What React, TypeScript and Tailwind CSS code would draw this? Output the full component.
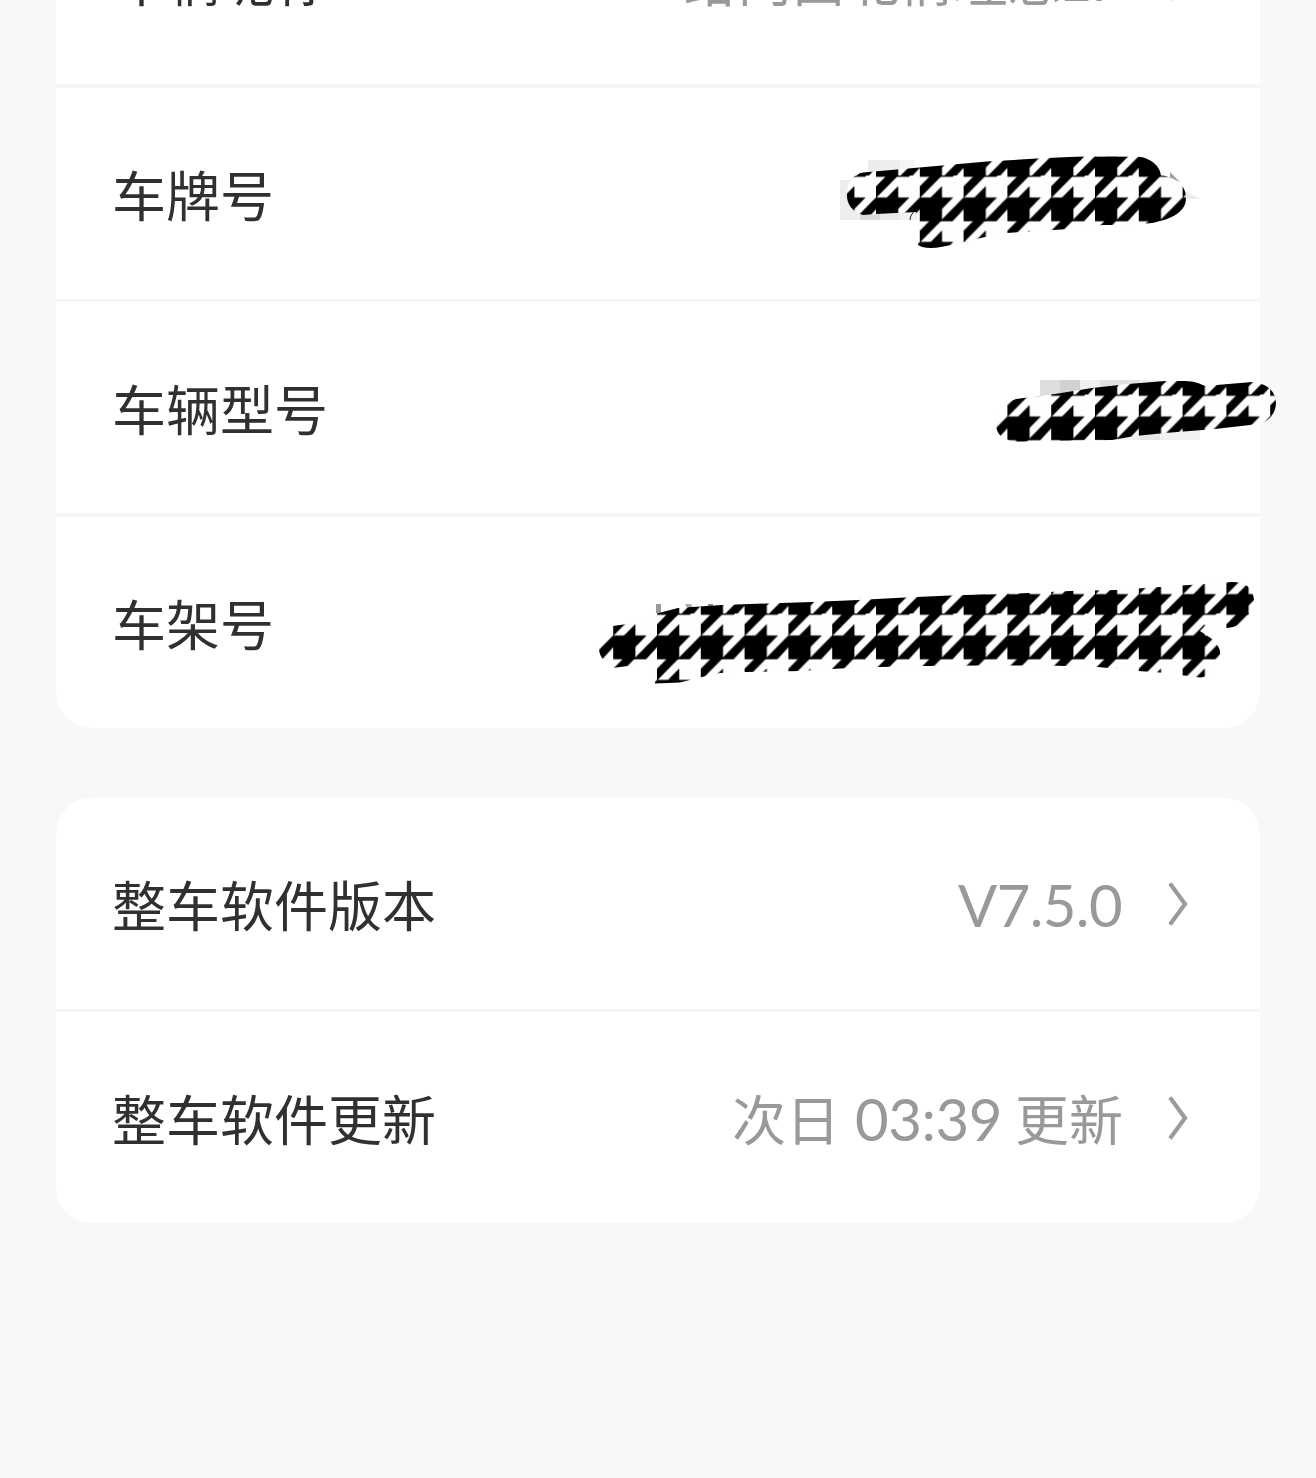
import type { ReactNode } from "react";

interface RowProps {
  label: string;
  children?: ReactNode;
}

const Row = ({ label, children }: RowProps) => (
  <div className="flex h-[211px] items-center justify-between pr-[72px] pl-14">
    <span className="text-[54px] leading-none text-[#303030]">{label}</span>
    {children}
  </div>
);

const Chevron = () => (
  <svg width="20" height="44" viewBox="0 0 20 44" fill="none" className="ml-[45px]">
    <path d="M2 1.5 L17 22 L2 42.5" stroke="#9b9b9b" strokeWidth="4.2" />
  </svg>
);

interface ValueProps {
  children: ReactNode;
}

const Value = ({ children }: ValueProps) => (
  <div className="flex items-center text-[54px] leading-none text-[#999999]">
    {children}
    <Chevron />
  </div>
);

// one houndstooth check, drawn on a 2x2 grid
const Check = ({ y }: { y: number }) => (
  <g transform={`translate(0 ${y}) scale(21.9 22.2)`} stroke="#000" strokeWidth="0.03">
    <path d="M0 0H1V1.04H0Z M1 0H1.5L1 .5Z M2 0V.5L1.5 1.04H1V1Z M.5 1H1L0 2V1.5Z M1 2V1.5L.5 2Z" />
  </g>
);

const checkRows = [-22.1, 22.3, 66.7, 111.1, 155.5, 199.9];

interface ScribbleProps {
  id: string;
  d: string;
  children?: ReactNode;
}

const Scribble = ({ id, d, children }: ScribbleProps) => (
  <>
    {children}
    <defs>
      <pattern id={id} patternUnits="userSpaceOnUse" x="0" y="175.5" width="43.8" height="219">
        <rect width="43.8" height="219" fill="#fefefe" />
        {checkRows.map((y) => (
          <Check key={y} y={y} />
        ))}
      </pattern>
    </defs>
    <path d={d} fill={`url(#${id})`} />
  </>
);

const Divider = ({ thick = false }: { thick?: boolean }) => (
  <div className={thick ? "h-1 bg-[#f5f5f5]" : "h-[3px] bg-[#f5f5f5]"} />
);

export default function App() {
  return (
    <div className="relative h-[1478px] w-[1316px] overflow-hidden bg-[#f8f8f8] px-14 font-['Noto_Sans_CJK_SC',sans-serif]">
      <div className="-mt-[127px] overflow-hidden rounded-[36px] bg-white">
        <Row label="车辆昵称">
          <Value>
            给向西北情理想
            <span className="-ml-0.5 font-['Lato',sans-serif] text-[58px]">L7</span>
          </Value>
        </Row>
        <Divider thick />
        <Row label="车牌号" />
        <Divider />
        <Row label="车辆型号" />
        <Divider thick />
        <Row label="车架号" />
      </div>

      <div className="mt-[70px] overflow-hidden rounded-[36px] bg-white">
        <Row label="整车软件版本">
          <Value>
            <span className="mt-0.5 mr-px font-['Lato',sans-serif] text-[58px] tracking-[-0.6px]">
              V7.5.0
            </span>
          </Value>
        </Row>
        <Divider />
        <Row label="整车软件更新">
          <Value>
            次日
            <span className="mt-0.5 mr-[13px] ml-[15px] font-['Lato',sans-serif] text-[58px] tracking-[-0.4px]">
              03:39
            </span>
            更新
          </Value>
        </Row>
      </div>

      {/* scribbles hiding the private values */}
      <svg
        className="pointer-events-none absolute top-0 left-0"
        width="1316"
        height="740"
        viewBox="0 0 1316 740"
      >
        <Scribble
          id="plate"
          d="M847 193 C848 181 854 174 863 172.500 L942 165.500 L987 161.500 L1037 158.500 L1080 156.500 H1136 C1150 157 1160 166 1161 175 C1175 178 1186 184 1186 198 C1186 212 1172 219 1152 223 L1130 225 L1103 225 L1076 228.500 L1053 230 L1024 232 L1006 233 L985 237 L955 244 C940 248 925 250 918 245 C919 235 919 225 916 212 L876 214 L863 215 C852 212 846 203 847 193Z"
        >
          <path d="M868 160h12v20h-12z" fill="#ececec" />
          <path d="M880 160h20v20h-20z" fill="#eeeeee" />
          <path d="M900 160h15v20h-15z" fill="#f5f5f5" />
          <path d="M840 180h20v40h-20z" fill="#ededed" />
          <path d="M860 200h20v20h-20z" fill="#dadada" />
          <path d="M880 200h20v20h-20z" fill="#e8e8e8" />
          <path d="M900 200h20v20h-20z" fill="#f2f2f2" />
          <path d="M1170 172l10 10-10-4z" fill="#a0a0a0" />
          <path d="M1184 190l16 9h-16z" fill="#ececec" />
          <path d="M910 220q0-6 8-12" fill="none" stroke="#222" />
        </Scribble>

        <Scribble
          id="model"
          d="M996 426 C998 412 1006 402 1016 399 L1055 394 L1092 388 L1128 384 L1165 381 L1185 381 C1194 381 1201 384 1205 386 L1252 382 C1268 384 1276 391 1276 404 C1275 414 1270 420 1262 423 L1250 425 L1215 429 L1165 433 L1135 436 L1112 440 L1070 440.500 L1030 441 C1010 443 998 440 996 426Z"
        >
          <path d="M1040 380h20v16h-20z" fill="#dddddd" />
          <path d="M1060 380h20v16h-20z" fill="#d2d2d2" />
          <path d="M1080 380h20v12h-20z" fill="#f0f0f0" />
          <path d="M1100 380h40v12h-40z" fill="#e2e2e2" />
          <path d="M1140 380h20v12h-20z" fill="#eeeeee" />
          <path d="M1080 430h20v10h-20z" fill="#eeeeee" />
          <path d="M1100 430h40v10h-40z" fill="#f4f4f4" />
          <path d="M1140 425h20v15h-20z" fill="#e6e6e6" />
          <path d="M1160 425h40v15h-40z" fill="#f2f2f2" />
        </Scribble>

        <Scribble
          id="vin"
          d="M599 648 C602 636 606 630 613 626 L634 623 L655 614 L678 608 L722 605 L766 603.500 L812 602 L858 600 L905 597.500 L950 595.500 L1029 593 L1070 591 L1117 590 L1160 587 L1204 584 L1232 582 C1246 582 1253 588 1254 600 C1252 612 1244 624 1236 626 C1226 630 1215 627 1205 626 L1200 631 L1212 639 C1218 645 1221 650 1220 655 C1216 668 1210 677 1200 677.500 L1180 675 L1160 672.500 L1138 671 L1098 667 L1050 665.500 L980 665.500 L925 666 L880 667 L840 668.500 L800 671 L745 672 L720 673 L702 677 L680 682.500 L655 683.500 L655 662 L628 666 L612 668 C604 662 599 656 599 648Z"
        >
          <path d="M656 604h5v9h-5z" fill="#999999" />
          <path d="M685 604h6l2 4h-6z" fill="#aaaaaa" />
          <path d="M708 604h5v4h-5z" fill="#888888" />
        </Scribble>
      </svg>
    </div>
  );
}
